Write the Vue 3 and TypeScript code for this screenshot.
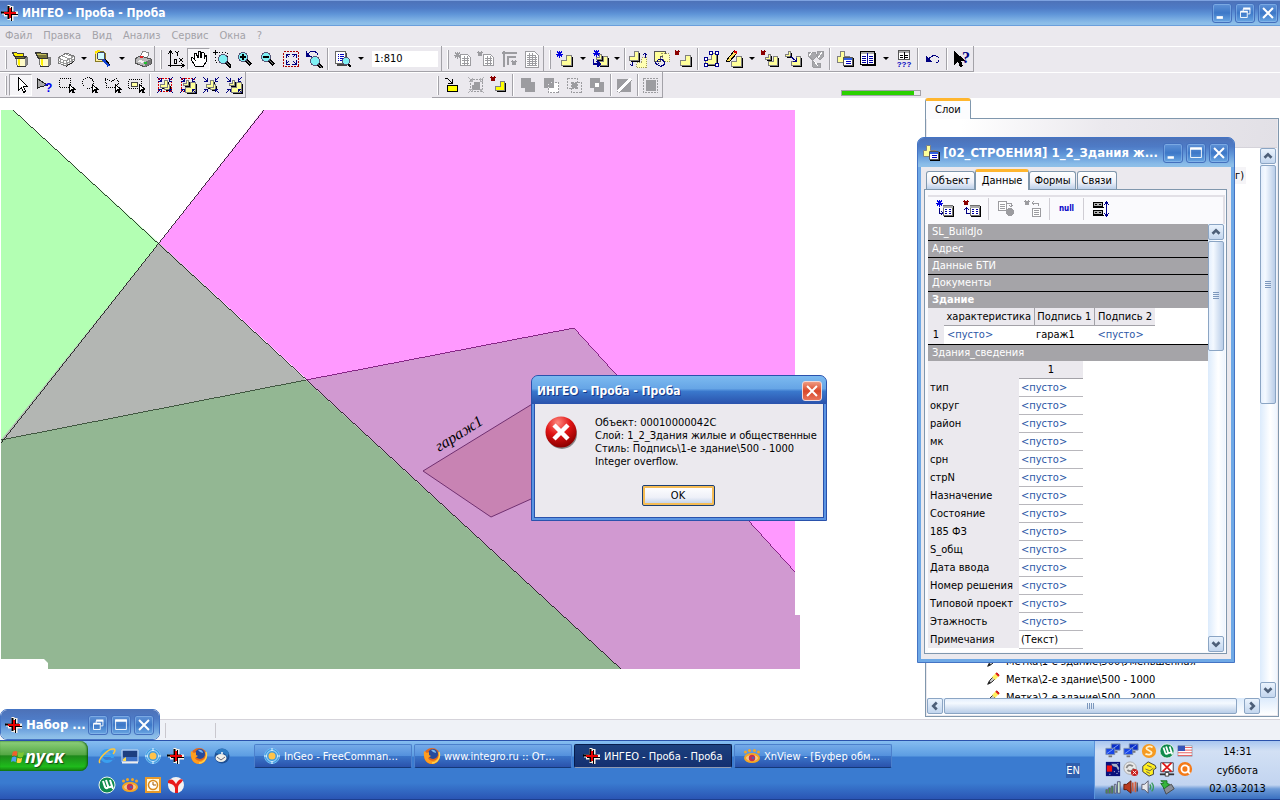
<script setup lang="ts">
import { ref } from 'vue'

interface Item {
  kind: 'btn' | 'drop' | 'sep' | 'scale'
  icon?: string
  label?: string
  size?: string
  pressed?: boolean
}

const b = (icon: string, label: string, pressed = false): Item => ({ kind: 'btn', icon, label, pressed })
const drop = (size = ''): Item => ({ kind: 'drop', size, label: 'Ещё' })
const sep = (size = ''): Item => ({ kind: 'sep', size })

// L-shaped building outline used by most of the object tools
const ell = (x: number, y: number, s = 1, fill = '#ffff99') => {
  const p = `M${x + 5 * s} ${y}h${5 * s}v${10 * s}h${-10 * s}v${-5 * s}h${5 * s}z`
  return `<path d="${p}" transform="translate(1 1)" fill="#000"/><path d="${p}" fill="${fill}" stroke="#808080"/>`
}
const dashEll = (x: number, y: number) =>
  `<path d="M${x + 5} ${y}h5v10h-10v-5h5z" fill="#ffffb4" stroke="#a09a60" stroke-dasharray="1 1"/>`
const cross = (x: number, y: number, c = '#8b0000') =>
  `<path d="M${x} ${y}l4 4M${x + 4} ${y}l-4 4" stroke="${c}" stroke-width="1.500" fill="none"/>`
const star = (x: number, y: number, c = '#0000e0') =>
  `<path d="M${x} ${y + 3}h7M${x + 3.5} ${y - 0.5}v7M${x + 1} ${y + 0.5}l5 5M${x + 6} ${y + 0.5}l-5 5" stroke="${c}" fill="none"/>`
const lens = (x: number, y: number) =>
  `<path d="M${x + 3} ${y + 3}l5 5" stroke="#000" stroke-width="3"/><path d="M${x + 3} ${y + 3}l4 4" stroke="#888" stroke-width="1"/><circle cx="${x}" cy="${y}" r="4.5" fill="#7ff0f4" stroke="#557"/>`
const ptr = (x: number, y: number) =>
  `<path d="M${x}.5 ${y}v7l2-2 1.500 3 1-.5-1.500-3h3z" fill="#fff" stroke="#000"/>`
const corners = (c: string) =>
  `<path d="M1 1l4 4M5 2v3H2M17 1l-4 4M13 2v3h3M1 17l4-4M2 13h3v3M17 17l-4-4M13 16v-3h3" stroke="${c}" fill="none"/>`
const page = (x: number, y: number, c = '#9c9ca0') =>
  `<path d="M${x}.5 ${y}.5h7l3 3v8h-10z" fill="#fff" stroke="${c}"/><path d="M${x + 2} ${y + 4}.5h7M${x + 2} ${y + 6}.5h7M${x + 2} ${y + 9}.5h7M${x + 4}.5 ${y + 2}v9M${x + 7}.5 ${y + 2}v9" stroke="${c}"/>`
const table = (x: number, y: number) =>
  `<path d="M${x + 1} ${y + 1}h10v11h-10z"/><path d="M${x}.5 ${y}.5h9v10h-9z" fill="#fff" stroke="#707070"/><path d="M${x} ${y + 1}.5h10" stroke="#aaa" stroke-width="2"/><path d="M${x + 2} ${y + 4}.5h2M${x + 6} ${y + 4}.5h2M${x + 2} ${y + 6}.5h2M${x + 6} ${y + 6}.5h2M${x + 2} ${y + 8}.5h2M${x + 6} ${y + 8}.5h2" stroke="#0000a0"/>`
const can = `<path d="M5.500 7.500h11v7l-2 2h-7l-2-2z" fill="#fffbc8" stroke="#777"/><path d="M14 8h2v6l-2 2z" fill="#888"/><path d="M7 8h2v8H8l-1-1z" fill="#fff200"/><path d="M6 16.500h9" stroke="#333"/>`
const logo = `<path d="M8 1v15M11 2v15M1 9h16M3 11h14" stroke="#f8f0e8" stroke-width="3"/><path d="M7.500 2v13M0 8.500h14" stroke="#000" stroke-width="2"/><path d="M10.500 3v14M4 10.500h13" stroke="#000" stroke-width="1"/><path d="M9 4v10M3 9h12" stroke="#e80000" stroke-width="2"/>`
const pc = (x: number, y: number, c = '#0a2ec8') =>
  `<path d="M${x} ${y}h10v7h-10z" fill="${c}" stroke="#8090a8"/><path d="M${x + 1} ${y + 6}l7-5" stroke="#86a8ff"/><path d="M${x + 3} ${y + 8}h4v2h-4z" fill="#777"/>`

const icons: Record<string, string> = {
  logo,
  open: `${can}<path d="M1.500 2.500h4l1 1h6v3h-9z" fill="#fff200" stroke="#444"/><path d="M4 6.500h11l-2 2H5z" fill="#77743a" stroke="#333"/>`,
  openDark: `${can}<path d="M1.500 2.500h5l1 1h6v5h-9z" fill="#777438" stroke="#333"/><path d="M3 4.500h9" stroke="#c7c060"/>`,
  layers: `<path d="M1 8l8-5 8 3v5l-8 5-8-3z" fill="#fff" stroke="#777"/><path d="M1 8l8 3 8-5M9 11v5M1 11l8 3 8-5M3 9v5M6 10v5M12 9v5M14 8v5M5 6l8 3M9 4l7 3" stroke="#999" fill="none"/><path d="M9 16l8-5v1l-8 5z" fill="#222"/>`,
  search: `<path d="M2 3l3-2h5l2 2v8H2z" fill="#fff0a0" stroke="#887b20"/><path d="M10 9l6 7" stroke="#1040d0" stroke-width="3"/><path d="M12 9l5 6" stroke="#000"/><circle cx="8" cy="6" r="4" fill="#cffcff" stroke="#446"/><path d="M2 3l3-2h2" stroke="#ffe600" stroke-width="2"/>`,
  print: `<path d="M6 7l3-6 6 2-2 6z" fill="#fff" stroke="#888"/><path d="M1 9l5-3 11 3v5l-6 3-10-4z" fill="#b9b9b9" stroke="#555"/><path d="M11 12l6-3v5l-6 3z" fill="#777"/><path d="M6 10l4 1-2 2-5-2z" fill="#f4f4f4"/><path d="M6 6h3v2H6z" fill="#e02020"/><path d="M10 12h3v2h-3z" fill="#20c030"/>`,
  axes: `<path d="M3.500 17V1M1 4l2.500-3L6 4M1 15.500h16M14 13l3 2.500-3 2.500" fill="none" stroke="#000"/><path d="M8 1l2 2 2-2M10.500 3v3M12 8l4 4M16 8l-4 4M7.500 9.500h2v4h-2z" stroke="#000" fill="none"/>`,
  hand: `<path d="M5 16L1 9l1-2 3 3L4 4l2-1 2 5V2l2-1 1 7 1-6 2 1v6l2-4 1 1-1 6-3 5z" fill="#fff" stroke="#000"/>`,
  zoomRect: `<path d="M2.500 2.500h12v10h-12z" fill="none" stroke="#000" stroke-dasharray="1 2"/><path d="M0 2.500h5M2.500 0v5" stroke="#000"/>${lens(10, 9)}`,
  zoomIn: `${lens(7, 7)}<path d="M4 7h6M7 4v6" stroke="#000" stroke-width="2"/>`,
  zoomOut: `${lens(7, 7)}<path d="M4 7h6" stroke="#000" stroke-width="2"/>`,
  fit: `<path d="M1.500 1.500h15v15h-15z" fill="none" stroke="#a00" stroke-dasharray="2 1"/><path d="M4 8V4h4M4 4l3 3M10 4h4v4M14 4l-3 3M4 10v4h4M4 14l3-3M14 10v4h-4M14 14l-3-3" stroke="#000080" fill="none"/>`,
  zoomBack: `${lens(10, 11)}<path d="M3 4c3-4 9-3 10 1M1.500 1v5h5" stroke="#000080" fill="none"/><path d="M1 2v5h5z" fill="#000080"/>`,
  pageZoom: `<path d="M3 3h10v13H3z" fill="#444"/><path d="M1.500 1.500h10v12h-10z" fill="#fff" stroke="#666"/><path d="M4 4.500h1M6 4.500h4M4 6.500h1M6 6.500h4M4 8.500h1M6 8.500h4M4 10.500h1M6 10.500h4" stroke="#0000c0"/><path d="M13 13l4 4" stroke="#000" stroke-width="2"/><circle cx="12" cy="11" r="3.500" fill="#7ff0f4" stroke="#557"/>`,
  gPageNew: page(6, 4) + star(0, 2, '#9c9ca0'),
  gPageDel: page(6, 4) + cross(1, 2, '#9c9ca0'),
  gRuler: `<path d="M2 3h15M4 1v16M7 7h9M8 6v9" stroke="#9c9ca0" stroke-width="2"/>${cross(12, 11, '#9c9ca0')}`,
  gPage: `<path d="M2.500 1.500h9l4 4v12h-13z" fill="#fff" stroke="#9c9ca0"/><path d="M4 5.500h9M4 7.500h10M4 9.500h10M4 11.500h10M4 13.500h10M4 15.500h10M6.500 3v13M9.500 3v13M12.500 5v11" stroke="#9c9ca0"/>`,
  newObj: ell(5.5, 5.5) + star(0, 1),
  newChild: ell(6.5, 6.5, 0.9) + ell(4.5, 4.5, 0.5) + star(1, 0) + `<path d="M1.500 9v5h6M5 11l3 3-3 3" stroke="#000090" fill="none" stroke-width="1.500"/>`,
  moveObj: ell(0.5, 1.5, 0.9) + dashEll(7.5, 7.5) + `<path d="M16 8V4M14 5l2-2 2 2M3 12v4M1 14l2 2" stroke="#000080" fill="none"/>`,
  rotateObj: `<path d="M2.500 1.500h11v5h-5v5h-6z" fill="#ffff99" stroke="#555"/><path d="M10 3.500h7v8h-5z" fill="#ffffb4" stroke="#a09a60" stroke-dasharray="1 1"/><path d="M5 12c0-4 7-3 8 1-1 4-7 4-8 1M3 12l2 3 2-2" stroke="#000080" fill="none"/>`,
  delObj: ell(5.5, 5.5) + cross(0, 1),
  nodes: ell(3.5, 3.5, 1.1) + `<path d="M7.500 1.500h3v3h-3zM13.500 1.500h3v3h-3zM2.500 7.500h3v3h-3zM2.500 13.500h3v3h-3zM13.500 13.500h3v3h-3z" fill="#fff" stroke="#000090"/>`,
  edit: ell(6.5, 6.5) + `<path d="M1 11L9 1l3 2-8 9z" fill="#ffe060" stroke="#000"/><path d="M9 1l3 2" stroke="#d00000" stroke-width="2"/>`,
  delSub: ell(7.5, 6.5, 0.9) + ell(4.5, 4.5, 0.5) + cross(0, 1),
  linkObj: ell(7.5, 6.5, 0.9) + ell(1.5, 1.5, 0.5) + '<path d="M6 6l6 5M12 8v3h-3" stroke="#000080" fill="none"/>',
  gMulti: `<path d="M2 2h6l2 4-4 4-5-4zM11 1h5v6l-3 3-3-3zM5 10l3 3h5v4H6z" fill="#a8a8ac" stroke="#9c9ca0"/><path d="M5 2l-3 4M15 2l-4 6M7 11l4 5" stroke="#fff"/>`,
  card: `<path d="M4.500 1.500h4v5h5v6h-12v-6h3z" fill="#ffff99" stroke="#808080"/><path d="M8 8h10v9H8z" fill="#000"/><path d="M7.500 7.500h9v8h-9z" fill="#fff" stroke="#555"/><path d="M8 9h8" stroke="#3060e0" stroke-width="2"/><path d="M10 11.500h5M10 13.500h5" stroke="#0000c0"/>`,
  grid: `<path d="M3 3h14v13H3z"/><path d="M1.500 1.500h14v13h-14z" fill="#fff" stroke="#000"/><path d="M2 3h13" stroke="#aaa" stroke-width="2"/><path d="M8.500 3v11M3 6.500h4M10 6.500h4M3 8.500h4M10 8.500h4M3 10.500h4M10 10.500h4M3 12.500h4M10 12.500h4" stroke="#0000a0"/>`,
  query: `<path d="M3.500 .5h11v9h-11z" fill="#fff" stroke="#555"/><path d="M4 2h10" stroke="#aaa" stroke-width="2"/><path d="M9 2v7M5 5.500h3M10 5.500h3M5 7.500h3M10 7.500h3" stroke="#000"/><text x="9" y="17" text-anchor="middle" font-family="Liberation Sans" font-weight="bold" font-size="8" fill="#0000c0">???</text>`,
  undo: `<path d="M5 9c3-5 11-4 10 1 0 2-2 3-3 3" fill="none" stroke="#000080"/><path d="M2 6v6h6z" fill="#000080"/>`,
  help: `<path d="M1 1v14l4-3 2 5 3-1-2-5h5z"/><text x="9" y="13" font-family="Liberation Serif" font-weight="bold" font-size="16" fill="#000080">?</text>`,
  pointer: `<path d="M6.500 1.500v13l3-3 2 5 2-1-2-5h4z" fill="#fff" stroke="#000"/>`,
  pointerQ: `<path d="M2.500 2.500v10l3-2 7-1z" fill="#aaa" stroke="#222"/><text x="10" y="16" font-family="Liberation Sans" font-weight="bold" font-size="12" fill="#0000f0">?</text>`,
  selRect: `<path d="M1.500 2.500h11v9h-11z" fill="none" stroke="#000" stroke-dasharray="1 1"/>${ptr(11, 9)}`,
  selCircle: `<circle cx="7" cy="7" r="5.500" fill="none" stroke="#000" stroke-dasharray="1 1"/>${ptr(11, 9)}`,
  selPoly: `<path d="M1.500 2.500l5 3 6-3 3 4-4 5h-9z" fill="none" stroke="#000" stroke-dasharray="1 1"/>${ptr(11, 9)}`,
  selIn: `<path d="M1.500 3.500h13v9h-13z" fill="none" stroke="#000" stroke-dasharray="1 1"/><path d="M4.500 6.500h6v4h-6z" fill="#ffffa0" stroke="#444"/>${ptr(12, 9)}`,
  grpRed: `<path d="M2.500 2.500h13v13h-13z" fill="none" stroke="#e00000" stroke-dasharray="2 1"/>${ell(4.5, 4.5, 0.7)}${ell(8.5, 8.5, 0.5)}${corners('#000080')}`,
  grpRed2: `<path d="M2.500 2.500h13v13h-13z" fill="none" stroke="#e00000" stroke-dasharray="2 1"/>${ell(6.5, 6.5)}${ell(4.5, 4.5, 0.5)}${corners('#000080')}`,
  grp: `${ell(4.5, 4.5, 0.7)}${ell(8.5, 8.5, 0.5)}${corners('#000080')}`,
  grp2: `${ell(6.5, 6.5)}${ell(4.5, 4.5, 0.5)}${corners('#000080')}`,
  into: `<path d="M1 2l3 1 4 4M8 3v4H4" stroke="#000" fill="none"/><path d="M3.500 9.500h10v6h-10z" fill="#ffff00" stroke="#000"/>`,
  gSel: `<path d="M3 3h12v12H3z" stroke="#9c9ca0" fill="none" stroke-dasharray="2 1"/><path d="M5 9h8v5H5zM7 6h6v3H7z" fill="#9c9ca0"/>${corners('#b0b0b4')}`,
  delYel: ell(5.5, 5.5, 0.9, '#ffff00') + cross(1, 1),
  gUnion: `<path d="M2 2h10v4h4v10H6v-4H2z" fill="#9c9ca0"/>`,
  gMinus: `<path d="M2 2h10v4H6v6H2z" fill="#9c9ca0"/><path d="M6.500 6.500h10v10h-10z" fill="#fff" stroke="#9c9ca0" stroke-dasharray="2 1"/><path d="M7 7h5v5H7z" fill="#9c9ca0"/>`,
  gInter: `<path d="M2.500 2.500h10v10h-10zM6.500 6.500h10v10h-10z" fill="none" stroke="#9c9ca0" stroke-dasharray="2 1"/><path d="M7 7h5v5H7z" fill="#9c9ca0"/>`,
  gXor: `<path d="M2 2h10v4h4v10H6v-4H2z" fill="#9c9ca0"/><path d="M7 7h4v4H7z" fill="#fff"/>`,
  gSplit: `<path d="M2 3h14v13H2z" fill="#9c9ca0"/><path d="M3 16L16 3" stroke="#fff" stroke-width="4"/><path d="M4 17L17 4" stroke="#9c9ca0"/>`,
  gBox: `<path d="M1.500 2.500h14v14h-14z" fill="none" stroke="#9c9ca0" stroke-dasharray="2 1"/><path d="M4 4h10v11H4z" fill="#9c9ca0"/>`,
  rowNew: table(7, 5) + star(0, 0) + '<path d="M3.500 8v5h3M5 11l2 2-2 2" stroke="#000080" fill="none"/>',
  rowDel: table(7, 5) + cross(1, 1) + '<path d="M7 13.500H3.500V8M1 10l2.500-2L6 10" stroke="#000080" fill="none"/>',
  gCopy: `<path d="M1.500 1.500h8v9h-8z" fill="#fff" stroke="#9c9ca0"/><path d="M3 4.500h5M3 6.500h5M3 8.500h5M10 3h4v4M12 5l2 2 2-2" stroke="#9c9ca0" fill="none"/><circle cx="13" cy="12" r="4" fill="#9c9ca0"/>`,
  gUndo: `${cross(1, 1, '#9c9ca0')}<path d="M9 3h5v3M10 1L8 3l2 2" stroke="#9c9ca0" fill="none"/><path d="M8.500 8.500h8v8h-8z" fill="#fff" stroke="#9c9ca0"/><path d="M10 10.500h5M10 12.500h5M10 14.500h5" stroke="#9c9ca0"/>`,
  rowHeight: `<path d="M1.500 2.500h9v4h-9zM1.500 10.500h9v4h-9z" fill="#b0b0b0" stroke="#000"/><path d="M1 7.500h11M1 15.500h11" stroke="#000"/><path d="M3 4.500h2M7 4.500h2M3 12.500h2M7 12.500h2" stroke="#000"/><path d="M14.500 2v14M12 5l2.500-3L17 5M12 13l2.500 3 2.500-3" stroke="#000090" fill="none"/>`,
  pen: `<path d="M4 14l2-4 7-7 2 2-7 7z" fill="#c8c8c8" stroke="#333"/><path d="M8 7l4-4 3 3-4 4z" fill="#fff060"/><path d="M12 3l3 3" stroke="#e02020" stroke-width="2"/><path d="M3 15l2-4 2 2z" fill="#222"/>`,
  ie: `<circle cx="9" cy="9" r="5.500" fill="none" stroke="#3aa0f0" stroke-width="3"/><path d="M4 9h10" stroke="#3aa0f0" stroke-width="2"/><path d="M11 11h6v2h-6z" fill="#3a80d8"/><path d="M2 16C-1 13 10 1 16 2c2 1 0 4-1 5" fill="none" stroke="#ffc73a" stroke-width="1.500"/>`,
  desktop: `<path d="M1 3h16v12H1z" fill="#3f72c8" stroke="#c5d7ee"/><path d="M2 4h14v6H2z" fill="#1d3e80"/><path d="M2 12l3-2v4H2z" fill="#ffd84a"/><path d="M1 15.500h16" stroke="#eee" stroke-width="2"/>`,
  commander: `<circle cx="9" cy="9" r="7.500" fill="#3d9ae0" stroke="#73baf0"/><circle cx="9" cy="9" r="5.500" fill="none" stroke="#b8dffc"/><circle cx="9" cy="9" r="3.500" fill="#ffc34a"/><path d="M9 1v3M9 14v3M1 9h3M14 9h3" stroke="#e9f6ff"/>`,
  firefox: `<circle cx="9" cy="9" r="8" fill="#e2671c"/><circle cx="10" cy="7" r="5" fill="#254a9c"/><path d="M8 3c3-1 5 1 5 3l-3-1z" fill="#7ab8f0"/><path d="M1 4l3 2 2-1v3l2 1-3 2c2 4 8 4 11-2 0 6-4 8-7 8-6 0-9-6-8-13z" fill="#ff9d1e"/><path d="M16 5c2 7-3 11-7 11" stroke="#ffd24a" fill="none" stroke-width="1.500"/>`,
  bird: `<circle cx="9" cy="9" r="7.500" fill="#1d4f94"/><ellipse cx="8" cy="11" rx="5.500" ry="4" fill="#f0f0ea"/><path d="M2 6c3-5 11-6 14 0l-2 5c0-4-4-6-7-4z" fill="#2f7cc4"/><path d="M4 10l4 3 4-3" fill="none" stroke="#667"/><circle cx="9" cy="6" r="1" fill="#fff"/>`,
  utor: `<circle cx="9" cy="9" r="8" fill="#0f8a4c" stroke="#e9f5ee"/><path d="M5 5l2 6c1 2 4 1 3-1L8 4M10 10c1 2 3 1 4 0l-2-6M14 10l1 3" fill="none" stroke="#fff" stroke-width="2"/>`,
  xn: `<ellipse cx="9" cy="11" rx="7" ry="4" fill="#f2c58a" stroke="#f5a623" stroke-width="2"/><circle cx="9" cy="11" r="3.200" fill="#c8324c"/><circle cx="10" cy="11" r="1.300" fill="#5560b0"/><circle cx="2.500" cy="5" r="1.500" fill="#f5a623"/><circle cx="6.500" cy="3.500" r="1.500" fill="#f5a623"/><circle cx="11.500" cy="3.500" r="1.500" fill="#f5a623"/><circle cx="15.500" cy="5" r="1.500" fill="#f5a623"/>`,
  outlook: `<path d="M1 1h16v16H1z" fill="#e79a2c"/><path d="M3 3h12v12H3z" fill="#fff6da"/><circle cx="9" cy="9" r="4.500" fill="#fff" stroke="#d98a1c" stroke-width="1.500"/><path d="M9 6v3h3" fill="none" stroke="#a05a00"/>`,
  yandex: `<circle cx="9" cy="9" r="8" fill="#f2f2f2"/><path d="M1 5c3-3 6-1 8 3 2-4 5-6 7-4-2 4-5 4-5 8v5H8v-5C7 8 4 8 1 7z" fill="#e81c1c"/>`,
  net: `${pc(7, 1)}${pc(1, 6, '#1746e8')}`,
  coin: `<circle cx="9" cy="9" r="8" fill="#f59a22"/><path d="M13 5c-3-2-7-1-7 1s6 3 6 5-4 3-7 1" fill="none" stroke="#fff3cf" stroke-width="2"/>`,
  flag: `<path d="M1 3h16v12H1z" fill="#fff" stroke="#9ab"/><path d="M1 5h16M1 8h16M1 11h16M1 14h16" stroke="#e04848"/><path d="M1 3h8v6H1z" fill="#3654b8"/>`,
  redNight: `<path d="M1 1h16v16H1z" fill="#08107c"/><path d="M2 5h6v7H2z" fill="#f01010"/><path d="M7 3h6l3 5-1 3-2-4-4-1z" fill="#a9b4c8"/><path d="M10 12h1M13 14h1M5 15h1M14 3h1M15 12h1" stroke="#fff"/>`,
  noSync: `<circle cx="8" cy="8" r="7" fill="#e8e8e8" stroke="#aaa"/><path d="M4 8a4 4 0 0 1 7-2M12 8a4 4 0 0 1-7 2" fill="none" stroke="#888" stroke-width="2"/><circle cx="13" cy="13" r="4" fill="#c81e1e"/><path d="M11 11l4 4M15 11l-4 4" stroke="#fff"/>`,
  phone: `<path d="M2 6l6-5 8 4 1 3-3 2v5l-5 2-7-5z" fill="#ffee20" stroke="#333"/><path d="M5 9l5 2 4-3M7 5l5 2M6 12l4 2" stroke="#555" fill="none"/>`,
  noNet: `<path d="M2 2h14v10H2z" fill="#fff" stroke="#334"/><path d="M4 2l10 10M14 2L4 12" stroke="#e01818" stroke-width="2"/><path d="M1 15h16" stroke="#333" stroke-width="2"/><path d="M7 13h4v4H7z" fill="#fff" stroke="#333"/>`,
  avast: `<circle cx="9" cy="9" r="8" fill="#f47a18"/><circle cx="9" cy="9" r="4" fill="none" stroke="#fff" stroke-width="2"/><path d="M13 6v7l2 1" fill="none" stroke="#fff" stroke-width="2"/>`,
  bars: `<path d="M1 12h2v4H1zM4 10h2v6H4zM7 8h2v8H7z" fill="#3a9a3c" stroke="#667"/><path d="M10.500 6h2v10h-2zM14 3h3v13h-3z" fill="#cfe8cf" stroke="#557"/>`,
  spkRed: `<path d="M1 6h3l5-4v14l-5-4H1z" fill="#b83a20" stroke="#5a1808"/><path d="M11 4v10M14 3v12" stroke="#d06040" stroke-width="2"/><path d="M16 4v10" stroke="#222"/>`,
  spk: `<path d="M1 6h3l4-4v14l-4-4H1z" fill="#e8e8ec" stroke="#556"/><path d="M10 6q2 3 0 6M12 4q4 5 0 10" fill="none" stroke="#3a9a5a" stroke-width="1.500"/>`,
  usb: `<path d="M5 10l9-4 3 5-9 6z" fill="#8a8f98" stroke="#444"/><path d="M2 2h7v3l3 1-6 5-4-6h3V4z" fill="#35b53c" stroke="#187020"/>`,
  winflag: `<path d="M3 4q3-2 5 0l-1 5q-3-2-5 0z" fill="#f0602c"/><path d="M9 4q3 2 6 0l-1 5q-3 2-6 0z" fill="#7cc832"/><path d="M2 10q3-2 5 0l-1 5q-3-2-5 0z" fill="#4aa0f0"/><path d="M8 10q3 2 5 0l-1 5q-3 2-5 0z" fill="#ffd23a"/>`,
}

const barFile: Item[] = [b('open', 'Открыть'), b('openDark', 'База'), b('layers', 'Слои'), drop(), b('search', 'Поиск'), drop('wide'), b('print', 'Печать')]
const barView: Item[] = [
  b('axes', 'Оси'), b('hand', 'Сдвиг', true), b('zoomRect', 'Рамка'), b('zoomIn', 'Увеличить'), b('zoomOut', 'Уменьшить'),
  b('fit', 'Вся карта'), b('zoomBack', 'Предыдущий вид'), sep(), b('pageZoom', 'Масштаб'), drop(), { kind: 'scale' },
]
const barPage: Item[] = [b('gPageNew', 'Новый лист'), b('gPageDel', 'Удалить лист'), b('gRuler', 'Линейка'), b('gPage', 'Лист')]
const barEdit: Item[] = [
  b('newObj', 'Новый объект'), drop(), b('newChild', 'Новый подобъект'), drop('slim'), sep('slim'), b('moveObj', 'Переместить'),
  b('rotateObj', 'Повернуть'), b('delObj', 'Удалить'), sep('slim'), b('nodes', 'Узлы'), b('edit', 'Правка'), drop(),
  b('delSub', 'Удалить контур'), b('linkObj', 'Связать'), b('gMulti', 'Группа'), sep(), b('card', 'Карточка'), b('grid', 'Таблица'),
  drop(), b('query', 'Запрос'), sep(), b('undo', 'Отменить'), sep(), b('help', 'Справка'),
]
const barSelect: Item[] = [
  b('pointer', 'Выбор', true), b('pointerQ', 'Информация'), b('selRect', 'Выбор рамкой'), b('selCircle', 'Выбор кругом'),
  b('selPoly', 'Выбор контуром'), b('selIn', 'Выбор внутри'), sep(), b('grpRed', 'Показать выбранные'), b('grpRed2', 'Показать выбранный'),
  b('grp', 'Показать все'), b('grp2', 'Показать объект'),
]
const barShape: Item[] = [
  b('into', 'Вставить'), b('gSel', 'Выбрать'), b('delYel', 'Удалить'), sep(), b('gUnion', 'Объединение'), b('gMinus', 'Вычитание'),
  b('gInter', 'Пересечение'), b('gXor', 'Исключение'), sep('slim'), b('gSplit', 'Разрезать'), sep('slim'), b('gBox', 'Рамка'),
]
const rows = [
  { name: 'top', bars: [barFile, barView, barPage, barEdit] },
  { name: 'second', bars: [barSelect, barShape] },
]

const menu = ['Файл', 'Правка', 'Вид', 'Анализ', 'Сервис', 'Окна', '?']
const scale = ref('1:810')
const tabs = ['Объект', 'Данные', 'Формы', 'Связи']
const activeTab = ref('Данные')
const sections = ['SL_BuildJo', 'Адрес', 'Данные БТИ', 'Документы', 'Здание']
const fields = [
  'тип', 'округ', 'район', 'мк', 'срн', 'стрN', 'Назначение', 'Состояние', '185 ФЗ', 'S_общ', 'Дата ввода',
  'Номер решения', 'Типовой проект', 'Этажность',
]
const layers = ['Метка\\1-е здание\\500\\Уменьшенная', 'Метка\\2-е здание\\500 - 1000', 'Метка\\2-е здание\\500 - 2000']
const message = ['Объект: 00010000042C', 'Слой: 1_2_Здания жилые и общественные', 'Стиль: Подпись\\1-е здание\\500 - 1000', 'Integer overflow.']
const quick = ['ie', 'desktop', 'commander', 'logo', 'firefox', 'bird', 'utor', 'xn', 'outlook', 'yandex']
const tasks = [
  { icon: 'commander', text: 'InGeo - FreeComman...' },
  { icon: 'firefox', text: 'www.integro.ru :: От...' },
  { icon: 'logo', text: 'ИНГЕО - Проба - Проба', active: true },
  { icon: 'xn', text: 'XnView - [Буфер обм...' },
]
const tray = ['net', 'net', 'coin', 'utor', 'flag', 'redNight', 'noSync', 'phone', 'noNet', 'avast', 'bars', 'spkRed', 'spk', 'usb']

const sys: Record<string, string> = {
  min: '<path d="M4 15h7" stroke="#fff" stroke-width="3"/>',
  max: '<path d="M4 5h12v10H4z" fill="none" stroke="#fff"/><path d="M3.500 5h13" stroke="#fff" stroke-width="3"/>',
  restore: '<path d="M8 8V5.500h7.500V11H13M5 8.500h7.500V15H5z" fill="none" stroke="#fff"/><path d="M8 5h8M5 8.500h8" stroke="#fff" stroke-width="2"/>',
  close: '<path d="M4.500 4.500l11 11M15.500 4.500l-11 11" stroke="#fff" stroke-width="2.200"/>',
}
const arrows: Record<string, string> = {
  up: 'M4 10l4-4 4 4',
  down: 'M4 6l4 4 4-4',
  left: 'M10 4L6 8l4 4',
  right: 'M6 4l4 4-4 4',
}
</script>

<template>
  <div class="screen">
    <header class="caption main-caption">
      <svg class="ico" viewBox="0 0 18 18" v-html="icons.logo"></svg>
      <h1>ИНГЕО - Проба - Проба</h1>
      <button v-for="k in ['min', 'restore', 'close']" :key="k" class="sysbtn" :aria-label="k"><svg viewBox="0 0 20 20" v-html="sys[k]"></svg></button>
    </header>

    <nav class="menu">
      <button v-for="m in menu" :key="m" disabled>{{ m }}</button>
    </nav>

    <div v-for="row in rows" :key="row.name" class="toolrow" :class="row.name">
      <div v-for="(bar, i) in row.bars" :key="i" class="toolbar">
        <template v-for="(it, j) in bar" :key="j">
          <i v-if="it.kind === 'sep'" class="sep" :class="it.size"></i>
          <button v-else-if="it.kind === 'drop'" class="drop" :class="it.size" :aria-label="it.label"></button>
          <input v-else-if="it.kind === 'scale'" v-model="scale" class="scale" aria-label="Масштаб" />
          <button v-else class="tool" :class="{ pressed: it.pressed }" :aria-label="it.label">
            <svg class="ico crisp" viewBox="0 0 18 18" v-html="icons[it.icon!]"></svg>
          </button>
        </template>
      </div>
      <div v-if="row.name === 'second'" class="progress"><div></div></div>
    </div>

    <main class="work">
      <svg class="map" viewBox="0 98 919 621" preserveAspectRatio="xMinYMin">
        <path d="M263 110H795V615H800V669H621L159 243z" fill="#ff99ff" />
        <path d="M1 110H13L159 243 1 442z" fill="#b3ffb3" />
        <path d="M159 243L306 380 1 440z" fill="#b3b6b3" />
        <path d="M1 440L306 380 621 669H48V663L44 659H1z" fill="#93b793" />
        <path d="M306 380L574 328 795 572V615H800V669H621z" fill="#d199d1" />
        <path d="M423 471L560 387V486L491 517z" fill="#c883b3" stroke="#703070" />
        <g fill="none" class="lines">
          <path d="M13 110L621 669" stroke="#000" />
          <path d="M264 110L1 443" stroke="#000" />
          <path d="M1 440L306 380" stroke="#1c331c" />
          <path d="M306 380L574 328 795 572" stroke="#660066" />
        </g>
        <text x="439" y="452" transform="rotate(-32 439 452)" class="maplabel">гараж1</text>
      </svg>

      <aside class="side">
        <button class="tab on">Слои</button>
        <div class="pane">
          <div class="panebar"></div>
          <div class="treewrap">
            <ul class="tree">
              <li class="first"><span>г)</span></li>
              <li v-for="l in layers" :key="l"><svg class="ico" viewBox="0 0 18 18" v-html="icons.pen"></svg>{{ l }}</li>
            </ul>
            <div class="vscroll">
              <button aria-label="Вверх"><svg viewBox="0 0 16 16"><path :d="arrows.up" /></svg></button>
              <div class="thumb side-thumb"></div>
              <button aria-label="Вниз"><svg viewBox="0 0 16 16"><path :d="arrows.down" /></svg></button>
            </div>
          </div>
          <div class="hscroll">
            <button aria-label="Влево"><svg viewBox="0 0 16 16"><path :d="arrows.left" /></svg></button>
            <div class="thumb hthumb"></div>
            <button aria-label="Вправо"><svg viewBox="0 0 16 16"><path :d="arrows.right" /></svg></button>
          </div>
        </div>
      </aside>
    </main>

    <footer class="status"><i></i><i></i></footer>

    <section class="window objwin">
      <header class="caption">
        <svg class="ico" viewBox="0 0 18 18" v-html="icons.card"></svg>
        <h2>[02_СТРОЕНИЯ] 1_2_Здания ж...</h2>
        <button v-for="k in ['min', 'max', 'close']" :key="k" class="sysbtn" :aria-label="k"><svg viewBox="0 0 20 20" v-html="sys[k]"></svg></button>
      </header>
      <div class="objbody">
        <div class="tabs">
          <button v-for="t in tabs" :key="t" class="tab" :class="{ on: t === activeTab }" @click="activeTab = t">{{ t }}</button>
        </div>
        <div class="sheet">
          <div class="databar">
            <button v-for="k in ['rowNew', 'rowDel']" :key="k" :aria-label="k"><svg class="ico crisp" viewBox="0 0 18 18" v-html="icons[k]"></svg></button>
            <i></i>
            <button v-for="k in ['gCopy', 'gUndo']" :key="k" :aria-label="k"><svg class="ico crisp" viewBox="0 0 18 18" v-html="icons[k]"></svg></button>
            <i></i>
            <button class="null">null</button>
            <i></i>
            <button aria-label="Высота строк"><svg class="ico crisp" viewBox="0 0 18 18" v-html="icons.rowHeight"></svg></button>
          </div>
          <div class="datawrap">
            <div class="data">
              <h3 v-for="s in sections" :key="s" :class="{ current: s === 'Здание' }">{{ s }}</h3>
              <table class="building">
                <thead>
                  <tr><th class="num"></th><th class="c1">характеристика</th><th class="c2">Подпись 1</th><th class="c2">Подпись 2</th></tr>
                </thead>
                <tbody>
                  <tr><th class="num">1</th><td class="empty">&lt;пусто&gt;</td><td>гараж1</td><td class="empty">&lt;пусто&gt;</td></tr>
                </tbody>
              </table>
              <h3 class="last">Здания_сведения</h3>
              <table class="info">
                <thead>
                  <tr><th></th><th class="val">1</th></tr>
                </thead>
                <tbody>
                  <tr v-for="f in fields" :key="f"><th>{{ f }}</th><td class="empty">&lt;пусто&gt;</td></tr>
                  <tr><th>Примечания</th><td class="memo">(Текст)</td></tr>
                </tbody>
              </table>
            </div>
            <div class="vscroll">
              <button aria-label="Вверх"><svg viewBox="0 0 16 16"><path :d="arrows.up" /></svg></button>
              <div class="thumb data-thumb"></div>
              <button aria-label="Вниз"><svg viewBox="0 0 16 16"><path :d="arrows.down" /></svg></button>
            </div>
          </div>
        </div>
      </div>
    </section>

    <section class="dialog" role="dialog" aria-labelledby="dlg-title">
      <header>
        <h2 id="dlg-title">ИНГЕО - Проба - Проба</h2>
        <button class="redclose" aria-label="Закрыть"><svg viewBox="0 0 20 20" v-html="sys.close"></svg></button>
      </header>
      <div class="dlgbody">
        <div class="msg">
          <svg viewBox="0 0 33 33">
            <defs>
              <radialGradient id="ball" cx=".4" cy=".2" r=".8">
                <stop offset="0" stop-color="#ff8a80" />
                <stop offset=".5" stop-color="#e01414" />
                <stop offset="1" stop-color="#8c0000" />
              </radialGradient>
            </defs>
            <circle cx="17" cy="18" r="15" fill="#444" opacity=".6" />
            <circle cx="16" cy="16" r="15.500" fill="url(#ball)" />
            <path d="M9 9l14 14M23 9L9 23" stroke="#fff" stroke-width="4.500" />
          </svg>
          <p><span v-for="m in message" :key="m">{{ m }}</span></p>
        </div>
        <button class="ok">OK</button>
      </div>
    </section>

    <section class="window setwin">
      <header class="caption">
        <svg class="ico" viewBox="0 0 18 18" v-html="icons.logo"></svg>
        <h2>Набор ...</h2>
        <button v-for="k in ['restore', 'max', 'close']" :key="k" class="sysbtn" :aria-label="k"><svg viewBox="0 0 20 20" v-html="sys[k]"></svg></button>
      </header>
    </section>

    <div class="taskbar">
      <button class="start"><svg viewBox="0 0 16 18" v-html="icons.winflag"></svg>пуск</button>
      <div class="quick">
        <button v-for="q in quick" :key="q" :aria-label="q"><svg class="ico" viewBox="0 0 18 18" v-html="icons[q]"></svg></button>
      </div>
      <div class="tasks">
        <button v-for="t in tasks" :key="t.text" :class="{ active: t.active }">
          <svg class="ico" viewBox="0 0 18 18" v-html="icons[t.icon]"></svg><span>{{ t.text }}</span>
        </button>
      </div>
      <button class="lang">EN</button>
      <div class="tray">
        <div class="trayicons">
          <svg v-for="(t, i) in tray" :key="i" class="ico" viewBox="0 0 18 18" v-html="icons[t]"></svg>
        </div>
        <div class="clock"><span>14:31</span><span>суббота</span><span>02.03.2013</span></div>
      </div>
    </div>
  </div>
</template>

<style>
body {
  overflow: hidden;
}
</style>

<style scoped>
* {
  box-sizing: border-box;
}
.screen {
  position: relative;
  display: flex;
  flex-direction: column;
  min-height: 100vh;
  background: #ebe9ee;
  color: #000;
  font: 11px/13px 'DejaVu Sans Condensed', 'Noto Sans', sans-serif;
}
button,
input {
  font: inherit;
  color: inherit;
  margin: 0;
  padding: 0;
  border: 0;
  background: none;
}
h1,
h2,
h3,
p,
ul {
  margin: 0;
  padding: 0;
}
svg {
  display: block;
  flex: none;
}
.ico {
  width: 18px;
  height: 18px;
}
.crisp {
  shape-rendering: crispEdges;
}

.caption {
  display: flex;
  align-items: center;
  gap: 3px;
  background: linear-gradient(#4d72b8 0, #4e7bc6 30%, #5f95d8 55%, #8abce8 90%, #8fc0e8 100%);
  color: #fff;
}
.caption h1,
.caption h2 {
  flex: 1;
  overflow: hidden;
  font-size: 12px;
  line-height: 18px;
  font-weight: bold;
  white-space: nowrap;
}
.window .caption h2 {
  font-size: 13px;
}
.main-caption {
  height: 26px;
  padding: 0 2px 0 1px;
  border-top: 1px solid #7da2e0;
  border-bottom: 1px solid #6a9fdc;
}
.sysbtn {
  width: 20px;
  height: 20px;
  border: 1px solid #4470bd;
  border-radius: 3px;
  background: linear-gradient(#5f92d6, #3d78c8 50%, #69a6e2);
  box-shadow: inset 0 0 0 1px rgba(160, 200, 245, 0.45);
}
.sysbtn svg {
  width: 18px;
  height: 18px;
}

.menu {
  display: flex;
  gap: 11px;
  height: 20px;
  padding-left: 5px;
  color: #a3a2a8;
}
.menu button {
  height: 18px;
}

.toolrow {
  display: flex;
  height: 26px;
  border-top: 1px solid #fff;
}
.toolbar {
  display: flex;
  align-items: center;
  height: 26px;
  margin-top: -1px;
  padding-left: 8px;
  border: solid #a3a2a8;
  border-width: 0 1px 1px 0;
  box-shadow: inset 0 1px #fff;
  background: linear-gradient(90deg, #fff 50%, #a3a2a8 50%) 5px 4px / 2px 19px no-repeat;
}
.toolbar + .toolbar {
  padding-left: 9px;
}
.second .toolbar + .toolbar {
  margin-left: 186px;
}
.second .toolbar {
  padding-left: 9px;
}
.tool {
  display: flex;
  align-items: center;
  justify-content: center;
  width: 23px;
  height: 22px;
}
.pressed {
  border: 1px solid #a3a2a8;
  border-right-color: #fff;
  border-bottom-color: #fff;
  background: #f6f5f8;
}
.drop {
  display: flex;
  align-items: center;
  justify-content: center;
  width: 13px;
  height: 22px;
}
.drop::before {
  content: '';
  border: 3px solid transparent;
  border-top-color: #000;
  border-bottom: 0;
}
.drop.wide {
  width: 18px;
}
.drop.slim {
  width: 10px;
}
.sep {
  width: 6px;
  height: 22px;
  background: linear-gradient(90deg, transparent 2px, #a3a2a8 2px, #a3a2a8 3px, #fff 3px, #fff 4px, transparent 4px);
}
.sep.slim {
  width: 4px;
}
.scale {
  width: 66px;
  height: 16px;
  margin: 0 3px 0 5px;
  padding: 0 2px;
  background: #fff;
}
.progress {
  width: 80px;
  height: 6px;
  margin: 17px 0 0 178px;
  border: 1px solid #a3a2a8;
}
.progress div {
  width: 92%;
  height: 4px;
  background: #2bd100;
}

.work {
  display: flex;
  flex: 1;
  min-height: 0;
  background: #fff;
}
.map {
  width: 919px;
  height: 621px;
}
.lines {
  shape-rendering: crispEdges;
  stroke-width: 0.75;
}
.maplabel {
  font: italic 16px 'Liberation Serif', serif;
}
.side {
  display: flex;
  flex-direction: column;
  align-items: flex-start;
  width: 355px;
  margin-left: auto;
  padding: 0 1px 2px 0;
}
.tab {
  height: 18px;
  padding: 0 4px;
  border: 1px solid #8097ad;
  border-bottom: 0;
  border-radius: 3px 3px 0 0;
  background: linear-gradient(#fff, #eef0f8 60%, #bcd0ea);
}
.tab.on {
  z-index: 1;
  height: 21px;
  margin-bottom: -1px;
  padding: 0 6px 2px;
  border-top: 3px solid #ffb62e;
  background: #fcfcfe;
}
.side .tab {
  padding: 0 9px 2px;
}
.pane {
  display: flex;
  flex: 1;
  flex-direction: column;
  align-self: stretch;
  min-height: 0;
  border: 1px solid #8097ad;
  padding: 0 1px 1px;
  background: #ebe9ee;
}
.panebar {
  height: 29px;
  border-bottom: 1px solid #d5d3da;
  background: linear-gradient(100deg, #fff 10%, #ebe9ee 50%, #e2e0e6);
}
.treewrap {
  display: flex;
  flex: 1;
  min-height: 0;
  background: #fff;
}
.tree {
  display: flex;
  flex: 1;
  flex-direction: column;
  contain: size;
  overflow: hidden;
  list-style: none;
}
.tree li {
  display: flex;
  flex: none;
  align-items: center;
  gap: 4px;
  height: 18px;
  padding-left: 57px;
}
.tree .first {
  justify-content: flex-end;
  margin: 18px 14px 468px 0;
}
.tree .first span {
  padding: 2px;
  background: #f5f4f7;
}
.vscroll {
  display: flex;
  flex-direction: column;
  width: 17px;
  background: linear-gradient(90deg, #dcebfc, #fff 60%, #eef5fe);
}
.hscroll {
  display: flex;
  height: 17px;
  padding-right: 17px;
  background: linear-gradient(#dcebfc, #fff);
}
.vscroll button,
.hscroll button,
.thumb {
  flex: none;
  width: 16px;
  height: 16px;
  border: 1px solid #8ba5c4;
  border-radius: 2px;
  background: linear-gradient(#eaf3fd, #c3d6ee);
}
.vscroll button:last-child,
.hscroll button:last-child {
  margin-top: auto;
}
.hscroll button:last-child {
  margin: 0 0 0 auto;
}
.vscroll path,
.hscroll path {
  fill: none;
  stroke: #4d5f78;
  stroke-width: 3;
}
.vscroll button svg,
.hscroll button svg {
  width: 14px;
  height: 14px;
}
.thumb {
  display: flex;
  align-items: center;
  justify-content: center;
  margin-top: 1px;
  background: linear-gradient(90deg, #e4effd, #f4f9ff 30%, #b9cde8);
}
.thumb::before {
  content: '';
  width: 6px;
  height: 8px;
  background: repeating-linear-gradient(#7d98bd 0, #7d98bd 1px, transparent 1px, transparent 2px);
}
.side-thumb {
  height: 239px;
}
.data-thumb {
  height: 110px;
}
.hscroll .hthumb {
  width: auto;
  flex: 1;
  margin: 0 7px 0 1px;
  background: linear-gradient(#e4effd, #f4f9ff 30%, #b9cde8);
}
.hthumb::before {
  width: 8px;
  height: 6px;
  background: repeating-linear-gradient(90deg, #7d98bd 0, #7d98bd 1px, transparent 1px, transparent 2px);
}

.status {
  display: flex;
  gap: 49px;
  height: 21px;
  padding: 3px 0 2px 165px;
  border-top: 1px solid #d5d3da;
  background: #eff2f7;
}
.status i {
  width: 1px;
  background: #c9c8ce;
}

.window {
  position: absolute;
  overflow: hidden;
  border: 1px solid #4474c4;
  border-radius: 7px 7px 0 0;
  background: #6fa9e6;
}
.window .caption {
  height: 29px;
  padding: 0 5px 0 4px;
}
.objwin {
  left: 917px;
  top: 137px;
  width: 318px;
  height: 526px;
  display: flex;
  flex-direction: column;
}
.objbody {
  display: flex;
  flex: 1;
  flex-direction: column;
  margin: 0 3px 3px;
  padding: 2px 4px 5px 3px;
  background: #ebe9ee;
}
.tabs {
  display: flex;
  align-items: flex-end;
  gap: 1px;
  height: 20px;
  padding-left: 2px;
}
.tabs .tab.on {
  margin-left: -1px;
  margin-right: -1px;
}
.sheet {
  display: flex;
  flex: 1;
  flex-direction: column;
  padding: 5px 1px 1px 3px;
  border: 1px solid #8097ad;
  background: #fafafd;
}
.databar {
  display: flex;
  align-items: center;
  height: 29px;
  padding: 0 0 4px 3px;
  border: solid #e2e0e6;
  border-width: 2px 2px 0 0;
}
.databar button {
  display: flex;
  align-items: center;
  justify-content: center;
  width: 27px;
  height: 24px;
}
.databar i {
  width: 1px;
  height: 22px;
  margin: 0 3px;
  background: #cfcdd4;
}
.databar .null {
  color: #0000c8;
  font-size: 8px;
  font-weight: bold;
}
.datawrap {
  display: flex;
  flex: 1;
  background: #fff;
}
.data {
  flex: 1;
}
.data h3 {
  height: 17px;
  padding-left: 4px;
  border-bottom: 1px solid #000;
  background: #a5a4a8;
  color: #fff;
  font-size: 11px;
  line-height: 16px;
  font-weight: normal;
}
.data h3.current {
  height: 16px;
  border-bottom: 0;
  font-weight: bold;
}
.data h3.last {
  border-top: 1px solid #000;
  border-bottom: 0;
}
table {
  border-collapse: collapse;
  table-layout: fixed;
}
th,
td {
  padding: 0 2px;
  font-weight: normal;
  text-align: left;
  white-space: nowrap;
}
.building {
  width: 227px;
}
.building .num {
  width: 16px;
  padding: 0;
  border: 0;
  background: #ebe9ee;
  text-align: center;
}
.building thead th {
  height: 17px;
  padding: 0 1px;
  border: solid #a3a2a8;
  border-width: 0 1px 1px 0;
  background: #ebe9ee;
  text-align: center;
}
.building .c1 {
  width: 90px;
}
.building thead th:last-child {
  border-right: 0;
}
.building tbody tr {
  height: 19px;
}
td {
  border-bottom: 1px solid #b8b7bc;
}
.building td {
  border: 0;
}
.building td.empty {
  padding-left: 3px;
}
.empty {
  color: #2c57a6;
}
.info {
  width: 155px;
}
.info tr {
  height: 18px;
}
.info thead tr {
  height: 17px;
}
.info th {
  background: #ebe9ee;
}
.info .val {
  width: 64px;
  border-bottom: 1px solid #a3a2a8;
  text-align: center;
}

.dialog {
  position: absolute;
  left: 531px;
  top: 375px;
  width: 296px;
  height: 146px;
  display: flex;
  flex-direction: column;
  padding: 0 2px 2px;
  overflow: hidden;
  border: 1px solid #2a52ac;
  border-radius: 7px 7px 0 0;
  background: #5b94e2;
}
.dialog header {
  display: flex;
  align-items: center;
  justify-content: space-between;
  height: 28px;
  margin: 0 -2px;
  padding: 2px 4px 0 5px;
  background: linear-gradient(#7cbaf0, #66a5e6 45%, #3a78cc 55%, #2a52ac);
  color: #fff;
}
.dialog h2 {
  font-size: 12px;
  text-shadow: 1px 1px #163a86;
}
.redclose {
  width: 20px;
  height: 20px;
  border: 1px solid #f0d9d9;
  border-radius: 3px;
  background: linear-gradient(#f09a80, #d9482a 50%, #e8745a);
}
.dlgbody {
  display: flex;
  flex: 1;
  flex-direction: column;
  align-items: center;
  border: 1px solid #2a52ac;
  border-top: 0;
  background: #ebe9ee;
}
.msg {
  display: flex;
  align-self: stretch;
  gap: 17px;
  padding: 12px 0 0 10px;
}
.msg svg {
  width: 33px;
  height: 33px;
}
.msg span {
  display: block;
  white-space: nowrap;
}
.ok {
  width: 73px;
  height: 21px;
  margin: 17px 2px 0 0;
  border: 1px solid #1c3f74;
  border-radius: 2px;
  background: linear-gradient(#fff, #eef0f8 60%, #b9cbe6);
  box-shadow: inset 0 0 0 2px #f5bc55;
}

.setwin {
  left: 0;
  top: 709px;
  width: 160px;
  height: 31px;
  border-radius: 7px;
}

.taskbar {
  display: flex;
  height: 60px;
  border-top: 1px solid #2a52ac;
  border-bottom: 1px solid #1d3f90;
  background: linear-gradient(#85bdf0, #5c9de2 15px, #3a7bd0 16px, #3a7bd0 42px, #2a55b4 58px);
  color: #fff;
}
.start {
  display: flex;
  align-items: center;
  width: 88px;
  height: 30px;
  padding-left: 10px;
  border-radius: 0 8px 8px 0;
  background: linear-gradient(#8fd07c, #55a845 45%, #1e8a1a 50%, #1fbb1c 85%, #148010);
  box-shadow: inset -1px 0 2px #0d5c10;
  font: italic bold 18px 'Open Sans', 'DejaVu Sans Condensed', sans-serif;
  text-shadow: 1px 1px 1px #184a18;
}
.start svg {
  width: 15px;
  height: 17px;
}
.quick {
  display: flex;
  flex-wrap: wrap;
  align-content: flex-start;
  width: 142px;
  margin-left: 10px;
}
.quick button {
  width: 23px;
  height: 29px;
}
.tasks {
  display: flex;
  flex: 1;
  gap: 2px;
  padding: 3px 0 0 14px;
}
.tasks button {
  display: flex;
  align-items: center;
  gap: 3px;
  width: 158px;
  height: 24px;
  padding-left: 8px;
  overflow: hidden;
  border: 1px solid #4c80cc;
  border-bottom: 1px solid #143878;
  border-radius: 2px;
  background: linear-gradient(#74aae8, #5390dc 50%, #3a74c8 52%, #2a52ac);
  white-space: nowrap;
}
.tasks .active {
  border-color: #081c4c;
  border-bottom-color: #8f9ab0;
  background: linear-gradient(#1c407e, #143070);
}
.lang {
  align-self: center;
  width: 14px;
  height: 15px;
  margin-right: 14px;
  background: #2f5fae;
}
.tray {
  display: flex;
  width: 186px;
  padding: 2px 0 0 10px;
  border-left: 1px solid #5a94dc;
  background: linear-gradient(#a8c6f0, #d2e0f4 10px, #c2d4f0 44px, #6d9bd8 48px, #3a70c0 58px);
  color: #000;
}
.trayicons {
  display: grid;
  grid-template-columns: repeat(5, 18px);
  grid-auto-rows: 18px;
  width: 90px;
}
.trayicons .ico {
  width: 16px;
  height: 16px;
}
.clock {
  display: flex;
  flex: 1;
  flex-direction: column;
  align-items: center;
  padding-right: 10px;
  padding-left: 10px;
}
.clock span {
  height: 19px;
  line-height: 17px;
}
</style>
